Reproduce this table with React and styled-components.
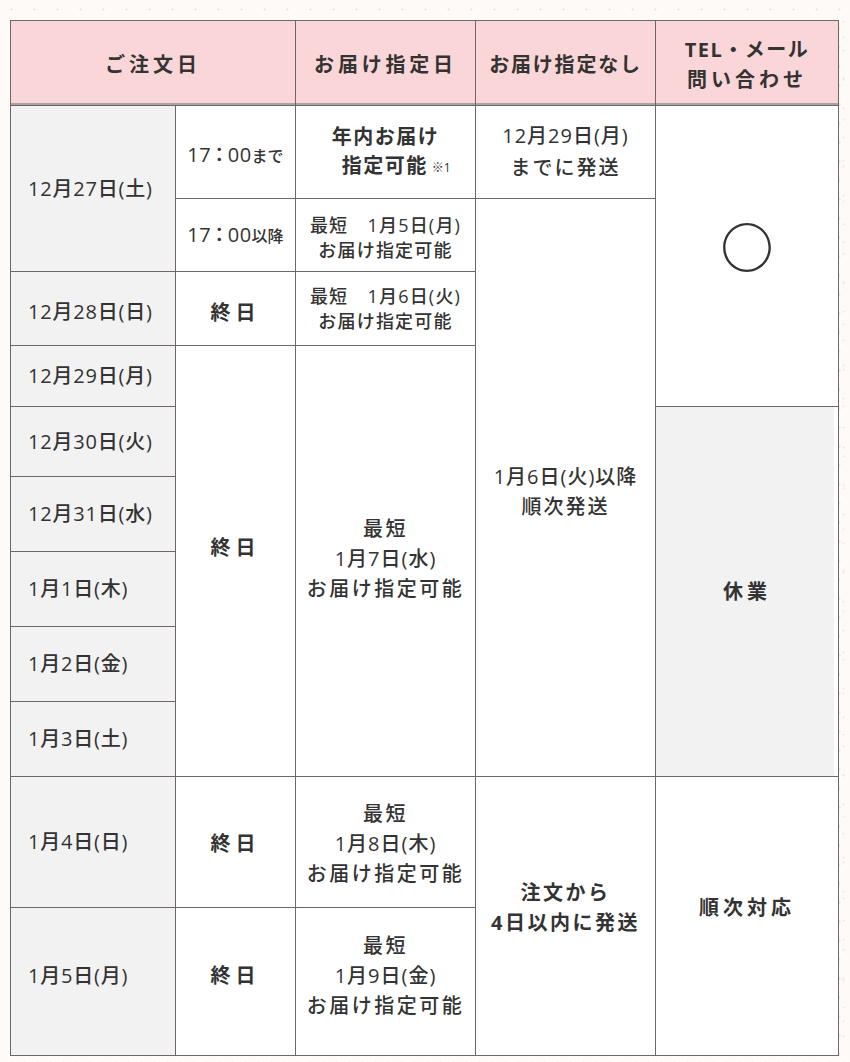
import React from "react";
import styled, { createGlobalStyle, css } from "styled-components";

const GlobalStyle = createGlobalStyle`
  html, body {
    margin: 0;
    padding: 0;
  }
  body {
    background-color: #fdfaf8;
    background-image:
      radial-gradient(circle, rgba(236, 196, 196, 0.55) 0.8px, transparent 1.4px),
      radial-gradient(circle, rgba(240, 210, 205, 0.5) 0.8px, transparent 1.4px),
      radial-gradient(circle, rgba(230, 190, 190, 0.35) 0.7px, transparent 1.3px);
    background-size: 23px 19px, 37px 29px, 13px 41px;
    background-position: 0 0, 11px 7px, 5px 17px;
    font-family: "Open Sans", "Noto Sans CJK JP", sans-serif;
    color: #333333;
  }
`;

const Page = styled.div`
  padding: 20px 12px 7px 10px;
`;

const BORDER = "#6d6769";

const Grid = styled.div`
  display: grid;
  grid-template-columns: 164px 119px 179px 179px 182px;
  grid-template-rows: 84px 92px 72px 73px 60px 69px 74px 74px 74px 74px 130px 147px;
  gap: 1px;
  width: 829px;
  box-sizing: border-box;
  border: 1px solid ${BORDER};
  background: ${BORDER};
`;

const bgs = {
  pink: css`background: #fbd6d8;`,
  gray: css`background: #f2f2f2;`,
  white: css`background: #ffffff;`,
  grayInset: css`background: linear-gradient(to right, #f2f2f2 calc(100% - 4px), #ffffff 0);`,
};

const Cell = styled.div`
  grid-row: ${(p) => p.$r} / span ${(p) => p.$rs || 1};
  grid-column: ${(p) => p.$c} / span ${(p) => p.$cs || 1};
  display: flex;
  flex-direction: column;
  justify-content: center;
  align-items: ${(p) => (p.$left ? "flex-start" : "center")};
  padding-left: ${(p) => (p.$left ? 17 : 0)}px;
  padding-top: ${(p) => p.$drop || 0}px;
  padding-bottom: ${(p) => p.$lift || 0}px;
  text-align: center;
  ${(p) => bgs[p.$bg || "white"]}
`;

const HeadCell = styled(Cell)`
  background: #fbd6d8;
  border-bottom: 2px solid #a9a3a5;
  font-family: "Open Sans", "Noto Sans CJK JP", sans-serif;
  font-weight: 700;
  font-size: 20px;
  line-height: 30px;
  letter-spacing: ${(p) => p.$ls || 3}px;
  padding-top: 6px;
`;

const HeadLine = styled.span`
  letter-spacing: ${(p) => p.$ls}px;
`;

const DateText = styled.span`
  font-size: 20px;
  font-weight: 500;
  letter-spacing: 0.8px;
  line-height: 28px;
`;

const Text = styled.span`
  display: block;
  font-size: ${(p) => p.$size || 20}px;
  font-weight: ${(p) => (p.$bold ? 700 : 500)};
  letter-spacing: ${(p) => (p.$ls !== undefined ? p.$ls : 2)}px;
  line-height: ${(p) => p.$lh || 30}px;
  white-space: pre;
`;

const Time = styled.span`
  display: block;
  font-size: 20px;
  font-weight: 500;
  line-height: 30px;
  letter-spacing: 0.5px;
  font-feature-settings: "palt" 1;
`;

const Colon = styled.span`
  margin: 0 3px;
`;

const Suffix = styled.span`
  font-size: 16px;
  letter-spacing: 0;
  font-feature-settings: normal;
`;

const Note = styled.span`
  font-size: 12px;
  font-weight: 500;
  letter-spacing: 0;
  margin-left: 4px;
  vertical-align: 1px;
`;

const Circle = styled.span`
  font-family: "Noto Sans CJK JP", sans-serif;
  font-size: 53px;
  line-height: 53px;
  font-weight: 700;
  margin-bottom: 22px;
`;

const dates = [
  { r: 5, label: "12月29日(月)" },
  { r: 6, label: "12月30日(火)" },
  { r: 7, label: "12月31日(水)" },
  { r: 8, label: "1月1日(木)" },
  { r: 9, label: "1月2日(金)" },
  { r: 10, label: "1月3日(土)" },
];

export default function App() {
  return (
    <>
      <GlobalStyle />
      <Page>
        <Grid>
          <HeadCell $r={1} $c={1} $cs={2} $ls={4}>ご注文日</HeadCell>
          <HeadCell $r={1} $c={3} $ls={3.8}>お届け指定日</HeadCell>
          <HeadCell $r={1} $c={4} $ls={1.8}>お届け指定なし</HeadCell>
          <HeadCell $r={1} $c={5}>
            <HeadLine $ls={1.5}>TEL・メール</HeadLine>
            <HeadLine $ls={4}>問い合わせ</HeadLine>
          </HeadCell>

          <Cell $r={2} $rs={2} $c={1} $bg="gray" $left>
            <DateText>12月27日(土)</DateText>
          </Cell>
          <Cell $r={2} $c={2} $drop={6}>
            <Time>
              17<Colon>：</Colon>00<Suffix>まで</Suffix>
            </Time>
          </Cell>
          <Cell $r={2} $c={3}>
            <Text $bold $ls={1.5} $lh={29}>年内お届け</Text>
            <Text $bold $ls={1.5} $lh={29}>
              {"\u3000指定可能"}
              <Note>※1</Note>
            </Text>
          </Cell>
          <Cell $r={2} $c={4}>
            <Text $ls={1} $lh={32}>12月29日(月)</Text>
            <Text $ls={2} $lh={32}>までに発送</Text>
          </Cell>
          <Cell $r={2} $rs={4} $c={5}>
            <Circle>○</Circle>
          </Cell>

          <Cell $r={3} $c={2}>
            <Time>
              17<Colon>：</Colon>00<Suffix>以降</Suffix>
            </Time>
          </Cell>
          <Cell $r={3} $c={3} $drop={5}>
            <Text $size={18} $ls={1.2} $lh={25}>{"最短\u30001月5日(月)"}</Text>
            <Text $size={18} $ls={1.2} $lh={25}>お届け指定可能</Text>
          </Cell>
          <Cell $r={3} $rs={8} $c={4} $drop={8}>
            <Text $ls={1}>1月6日(火)以降</Text>
            <Text $ls={2}>順次発送</Text>
          </Cell>

          <Cell $r={4} $c={1} $bg="gray" $left $drop={6}>
            <DateText>12月28日(日)</DateText>
          </Cell>
          <Cell $r={4} $c={2} $drop={8}>
            <Text $bold $ls={5}>終日</Text>
          </Cell>
          <Cell $r={4} $c={3}>
            <Text $size={18} $ls={1.2} $lh={25}>{"最短\u30001月6日(火)"}</Text>
            <Text $size={18} $ls={1.2} $lh={25}>お届け指定可能</Text>
          </Cell>

          {dates.map((d) => (
            <Cell key={d.label} $r={d.r} $c={1} $bg="gray" $left>
              <DateText>{d.label}</DateText>
            </Cell>
          ))}

          <Cell $r={5} $rs={6} $c={2} $lift={26}>
            <Text $bold $ls={5}>終日</Text>
          </Cell>
          <Cell $r={5} $rs={6} $c={3} $lift={4}>
            <Text $ls={2.5}>最短</Text>
            <Text $ls={1}>1月7日(水)</Text>
            <Text $ls={2.5}>お届け指定可能</Text>
          </Cell>

          <Cell $r={6} $rs={5} $c={5} $bg="grayInset">
            <Text $bold $ls={4}>休業</Text>
          </Cell>

          <Cell $r={11} $c={1} $bg="gray" $left>
            <DateText>1月4日(日)</DateText>
          </Cell>
          <Cell $r={11} $c={2} $drop={4}>
            <Text $bold $ls={5}>終日</Text>
          </Cell>
          <Cell $r={11} $c={3} $drop={4}>
            <Text $ls={2.5}>最短</Text>
            <Text $ls={1}>1月8日(木)</Text>
            <Text $ls={2.5}>お届け指定可能</Text>
          </Cell>
          <Cell $r={11} $rs={2} $c={4} $lift={16}>
            <Text $bold $ls={2.5}>注文から</Text>
            <Text $bold $ls={2.5}>4日以内に発送</Text>
          </Cell>
          <Cell $r={11} $rs={2} $c={5} $lift={16}>
            <Text $bold $ls={4}>順次対応</Text>
          </Cell>

          <Cell $r={12} $c={1} $bg="gray" $left $lift={12}>
            <DateText>1月5日(月)</DateText>
          </Cell>
          <Cell $r={12} $c={2} $lift={12}>
            <Text $bold $ls={5}>終日</Text>
          </Cell>
          <Cell $r={12} $c={3} $lift={12}>
            <Text $ls={2.5}>最短</Text>
            <Text $ls={1}>1月9日(金)</Text>
            <Text $ls={2.5}>お届け指定可能</Text>
          </Cell>
        </Grid>
      </Page>
    </>
  );
}
